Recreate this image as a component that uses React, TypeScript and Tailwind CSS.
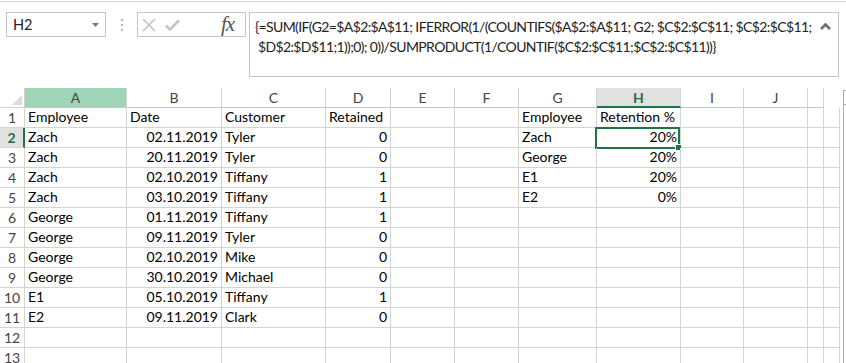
import React from 'react';

const colW = [
  'w-[25px]',
  'w-[102px]',
  'w-[95px]',
  'w-[104px]',
  'w-[65px]',
  'w-[64px]',
  'w-[64px]',
  'w-[78px]',
  'w-[84px]',
  'w-[63px]',
  'w-[64px]',
  'w-[16px]',
];

const letters = ['A', 'B', 'C', 'D', 'E', 'F', 'G', 'H', 'I', 'J', ''];

type Cell = { v: string; r?: boolean };

const L = (v: string): Cell => ({ v });
const R = (v: string): Cell => ({ v, r: true });
const E: Cell = { v: '' };

const rows: Cell[][] = [
  [L('Employee'), L('Date'), L('Customer'), L('Retained'), E, E, L('Employee'), L('Retention %'), E, E, E],
  [L('Zach'), R('02.11.2019'), L('Tyler'), R('0'), E, E, L('Zach'), R('20%'), E, E, E],
  [L('Zach'), R('20.11.2019'), L('Tyler'), R('0'), E, E, L('George'), R('20%'), E, E, E],
  [L('Zach'), R('02.10.2019'), L('Tiffany'), R('1'), E, E, L('E1'), R('20%'), E, E, E],
  [L('Zach'), R('03.10.2019'), L('Tiffany'), R('1'), E, E, L('E2'), R('0%'), E, E, E],
  [L('George'), R('01.11.2019'), L('Tiffany'), R('1'), E, E, E, E, E, E, E],
  [L('George'), R('09.11.2019'), L('Tyler'), R('0'), E, E, E, E, E, E, E],
  [L('George'), R('02.10.2019'), L('Mike'), R('0'), E, E, E, E, E, E, E],
  [L('George'), R('30.10.2019'), L('Michael'), R('0'), E, E, E, E, E, E, E],
  [L('E1'), R('05.10.2019'), L('Tiffany'), R('1'), E, E, E, E, E, E, E],
  [L('E2'), R('09.11.2019'), L('Clark'), R('0'), E, E, E, E, E, E, E],
  [E, E, E, E, E, E, E, E, E, E, E],
  [E, E, E, E, E, E, E, E, E, E, E],
];

const FormulaBar: React.FC = () => (
  <div className="h-[87px] shrink-0 border-t border-[#d4d4d4] flex items-start pt-[10px]">
    {/* name box */}
    <div className="shrink-0 ml-[6px] w-[100px] h-[25px] border border-[#c6c6c6] flex items-center pl-[6px] pr-[6px] text-[14.5px] text-[#222]">
      <span className="flex-1">H2</span>
      <svg width="7" height="4" viewBox="0 0 7 4">
        <path d="M0 0 L7 0 L3.5 4 Z" fill="#777" />
      </svg>
    </div>
    <div className="shrink-0 w-[31px] h-[25px] flex flex-col items-center justify-center gap-[3px]">
      <div className="w-[2px] h-[2px] bg-[#b5b5b5]" />
      <div className="w-[2px] h-[2px] bg-[#b5b5b5]" />
      <div className="w-[2px] h-[2px] bg-[#b5b5b5]" />
    </div>
    {/* cancel / enter / fx */}
    <div className="shrink-0 w-[109px] h-[25px] border border-[#c6c6c6] flex items-center">
      <svg width="14" height="14" viewBox="0 0 14 14" className="ml-[4px]">
        <path d="M1 1 L13 13 M13 1 L1 13" stroke="#c3c3c3" strokeWidth="1.6" />
      </svg>
      <svg width="15" height="12" viewBox="0 0 15 12" className="ml-[9px]">
        <path d="M1 6.5 L5 10.5 L14 1.5" stroke="#c3c3c3" strokeWidth="2.6" fill="none" />
      </svg>
      <span className="ml-[41px] font-['Liberation_Serif',serif] italic text-[21px] leading-none text-[#555] tracking-[-1px]">
        fx
      </span>
    </div>
    {/* formula */}
    <div className="shrink-0 ml-[3px] w-[590px] h-[65px] border border-[#c6c6c6] flex">
      <div className="flex-1 min-w-0 overflow-hidden pl-[5px] pt-[4px] text-[14px] tracking-[-0.62px] leading-[20px] text-[#222] whitespace-pre">
        <div>{'{=SUM(IF(G2=$A$2:$A$11; IFERROR(1/(COUNTIFS($A$2:$A$11; G2; $C$2:$C$11; $C$2:$C$11;'}</div>
        <div>{' $D$2:$D$11;1));0); 0))/SUMPRODUCT(1/COUNTIF($C$2:$C$11;$C$2:$C$11))}'}</div>
      </div>
      <div className="shrink-0 w-[18px] pt-[10px]">
        <svg width="11" height="7" viewBox="0 0 11 7">
          <path d="M1 6 L5.5 1.5 L10 6" stroke="#6e6e6e" strokeWidth="2.6" fill="none" />
        </svg>
      </div>
    </div>
  </div>
);

const Grid: React.FC = () => (
  <div className="flex flex-col shrink-0">
    {/* column headers */}
    <div className="flex h-[20px] shrink-0">
      <div className={`${colW[0]} relative border-r border-b border-[#d4d4d4] bg-white`}>
        <svg width="10" height="10" viewBox="0 0 10 10" className="absolute right-[2px] bottom-[2px]">
          <path d="M10 0 L10 10 L0 10 Z" fill="#dcdcdc" />
        </svg>
      </div>
      {letters.map((l, i) => {
        const sel = l === 'H';
        const hl = l === 'A';
        return (
          <div
            key={i}
            className={`${colW[i + 1]} flex items-center justify-center text-[14px] border-r border-[#d4d4d4] ${
              sel
                ? 'bg-[#e1e1e1] text-[#217346] font-bold border-b-2 border-b-[#217346]'
                : hl
                ? 'bg-[#9fd5b7] text-[#444] border-b border-b-[#c6c6c6]'
                : 'bg-white text-[#444] border-b border-b-[#c6c6c6]'
            }`}
          >
            {l}
          </div>
        );
      })}
    </div>
    {rows.map((row, ri) => {
      const rn = ri + 1;
      const selRow = rn === 2;
      return (
        <div key={ri} className="flex h-[20px] shrink-0">
          <div
            className={`${colW[0]} flex items-center justify-center text-[14px] border-b border-[#d4d4d4] ${
              selRow
                ? 'bg-[#e1e1e1] text-[#217346] font-bold border-r-2 border-r-[#217346]'
                : 'bg-white text-[#444] border-r border-r-[#d4d4d4]'
            }`}
          >
            {rn}
          </div>
          {row.map((c, ci) => {
            const isSel = rn === 2 && ci === 7;
            return (
              <div
                key={ci}
                className={`${colW[ci + 1]} relative flex items-end pb-[1px] border-r border-b border-[#d4d4d4] text-[14px] leading-[18px] text-black whitespace-nowrap ${
                  c.r ? 'justify-end pr-[3px]' : 'pl-[3px]'
                }`}
              >
                {c.v}
                {isSel && (
                  <div className="absolute -left-[2px] -top-[1px] w-[85px] h-[22px] border-2 border-[#217346]">
                    <div className="absolute -right-[4px] -bottom-[4px] w-[7px] h-[7px] bg-[#217346] border border-white" />
                  </div>
                )}
              </div>
            );
          })}
          <div className={`${colW[11]} border-b border-r border-[#d4d4d4]`} />
        </div>
      );
    })}
  </div>
);

const App: React.FC = () => {
  return (
    <div className="w-[846px] h-[363px] overflow-hidden bg-white flex font-['Lato',sans-serif]">
      <div className="w-[2px] h-full bg-[#217346]" />
      <div className="flex-1 flex flex-col">
        <div className="h-[1px] shrink-0" />
        <FormulaBar />
        <div className="flex shrink-0">
          <Grid />
          <div className="shrink-0 ml-[3px] mt-[2px] w-[15px] h-[300px] border-l border-r border-[#ababab] flex flex-col">
            <div className="h-[15px] border-t border-b border-[#ababab] flex items-center justify-center">
              <svg width="7" height="4" viewBox="0 0 7 4">
                <path d="M0 4 L7 4 L3.5 0 Z" fill="#555" />
              </svg>
            </div>
          </div>
        </div>
      </div>
    </div>
  );
};

export default App;
